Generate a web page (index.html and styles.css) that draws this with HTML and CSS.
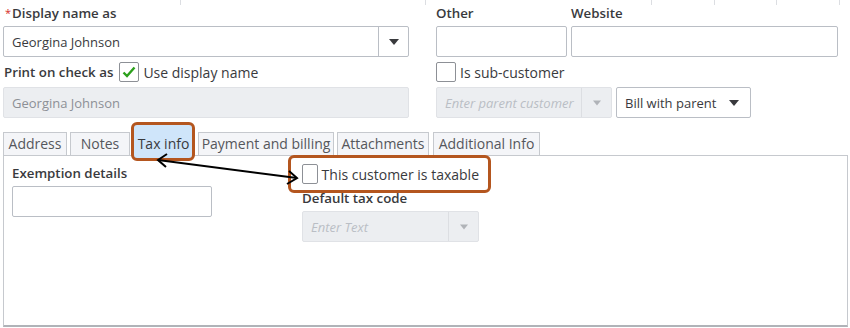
FILE: index.html
```html
<!DOCTYPE html>
<html lang="en">
<head>
    <meta charset="UTF-8">
    <title>Customer information</title>
    <link rel="stylesheet" href="styles.css">
</head>
<body>
    <div class="page">
        <div class="strip">
            <span class="cell c1"></span>
            <span class="cell c2"></span>
            <span class="cell c3"></span>
            <span class="cell c4"></span>
            <span class="cell c5"></span>
            <span class="cell c6"></span>
        </div>

        <div class="form">
            <div class="col-left">
                <div class="lbl"><span class="req">*</span>Display name as</div>
                <div class="select">
                    <span class="val">Georgina Johnson</span>
                    <span class="drop"><span class="caret"></span></span>
                </div>
                <div class="check-row">
                    <span class="lbl">Print on check as</span>
                    <span class="box">
                        <svg width="14" height="12" viewBox="0 0 14 12"><path d="M1.5 6.5 L5 10 L12.5 1.5" fill="none" stroke="#2ca01c" stroke-width="2.4"/></svg>
                    </span>
                    <span class="txt">Use display name</span>
                </div>
                <div class="input disabled">Georgina Johnson</div>
            </div>

            <div class="col-right">
                <div class="pair">
                    <div class="field other">
                        <div class="lbl">Other</div>
                        <div class="input"></div>
                    </div>
                    <div class="field website">
                        <div class="lbl">Website</div>
                        <div class="input"></div>
                    </div>
                </div>
                <div class="check-row">
                    <span class="box"></span>
                    <span class="txt">Is sub-customer</span>
                </div>
                <div class="pair">
                    <div class="select disabled parent">
                        <span class="val ph">Enter parent customer</span>
                        <span class="drop"><span class="caret"></span></span>
                    </div>
                    <div class="select bill">
                        <span class="val">Bill with parent</span>
                        <span class="caret"></span>
                    </div>
                </div>
            </div>
        </div>

        <!-- annotation box behind the active tab -->
        <div class="mark mark-tab"></div>

        <div class="tabs">
            <span class="tab t-address">Address</span>
            <span class="tab t-notes">Notes</span>
            <span class="tab t-tax active">Tax info</span>
            <span class="tab t-pay">Payment and billing</span>
            <span class="tab t-att">Attachments</span>
            <span class="tab t-add">Additional Info</span>
        </div>

        <div class="panel">
            <div class="tax-col">
                <div class="lbl">Exemption details</div>
                <div class="input exempt"></div>
            </div>
            <div class="tax-col">
                <div class="check-row taxable">
                    <span class="box"></span>
                    <span class="txt">This customer is taxable</span>
                </div>
                <div class="lbl">Default tax code</div>
                <div class="select disabled code">
                    <span class="val ph">Enter Text</span>
                    <span class="drop"><span class="caret"></span></span>
                </div>
            </div>
        </div>

        <div class="mark mark-taxable"></div>
        <svg class="arrow" width="850" height="328" viewBox="0 0 850 328">
            <g fill="none" stroke="#000" stroke-width="2">
                <line x1="158" y1="160" x2="297" y2="178"/>
                <path d="M167 154 L158 160 L166 167"/>
                <path d="M289 171 L297 178 L287 184"/>
            </g>
        </svg>
    </div>
</body>
</html>
```

FILE: styles.css
```css
* {
    margin: 0;
    padding: 0;
    box-sizing: border-box;
}
body {
    background: #fff;
    color: #393a3d;
    font-family: 'Open Sans', 'Liberation Sans', sans-serif;
    font-size: 13px;
}
.page {
    position: relative;
    width: 850px;
    height: 328px;
    overflow: hidden;
}
.strip {
    display: flex;
    height: 5px;
}
.cell {
    border-right: 1px solid #dcdee2;
}
.c1 { width: 181px; }
.c2 { width: 245px; }
.c3 { width: 226px; }
.c4 { width: 63px; }
.c5 { width: 62px; }
.c6 { width: 63px; }

.lbl {
    font-size: 13.3px;
    font-weight: 600;
    line-height: 16px;
    height: 21px;
    white-space: nowrap;
}
.req {
    color: #d52b1e;
    font-size: 11px;
    font-weight: 400;
    vertical-align: top;
    margin-right: 1px;
}

.form {
    display: flex;
    gap: 27px;
    padding-left: 3px;
}
.col-left {
    width: 406px;
}
.col-left > .lbl {
    padding-left: 2px;
}
.col-right {
    width: 402px;
}
.pair {
    display: flex;
    gap: 4px;
}
.other { width: 131px; }
.website { width: 267px; }

.input, .select {
    height: 31px;
    border: 1px solid #babec5;
    border-radius: 2px;
    background: #fff;
    display: flex;
    align-items: center;
}
.input {
    padding-left: 8px;
}
.disabled {
    background: #eceef1;
    border-color: #e0e2e6;
    color: #8d9096;
}
.select .val {
    flex: 1;
    padding-left: 8px;
    white-space: nowrap;
    overflow: hidden;
}
.ph {
    font-style: italic;
    color: #babec5;
}
.drop {
    width: 30px;
    height: 100%;
    border-left: 1px solid #babec5;
    display: flex;
    align-items: center;
    justify-content: center;
}
.disabled .drop {
    border-left-color: #dcdee2;
}
.caret {
    width: 0;
    height: 0;
    border-left: 5px solid transparent;
    border-right: 5px solid transparent;
    border-top: 6px solid #393a3d;
}
.disabled .caret {
    border-top-color: #b0b3b8;
    transform: scale(0.8);
}
.parent { width: 176px; }
.bill {
    width: 135px;
    padding-right: 11px;
}

.check-row {
    display: flex;
    align-items: center;
    height: 30px;
    gap: 4px;
}
.check-row .lbl {
    height: auto;
    padding-left: 1px;
    margin-right: 2px;
}
.box {
    width: 20px;
    height: 20px;
    border: 1px solid #8d9096;
    border-radius: 2px;
    background: #fff;
    display: flex;
    align-items: center;
    justify-content: center;
}
.txt {
    font-size: 14px;
    white-space: nowrap;
}

.tabs {
    display: flex;
    gap: 3px;
    margin-top: 14px;
    padding-left: 3px;
    height: 23px;
}
.tab {
    position: relative;
    z-index: 1;
    font-size: 14px;
    line-height: 22px;
    text-align: center;
    border: 1px solid #c6c9ce;
    border-bottom: none;
    background: #f4f5f8;
    color: #55575c;
    white-space: nowrap;
}
.t-address { width: 64px; }
.t-notes { width: 60px; }
.t-tax { width: 61px; }
.t-pay { width: 136px; margin-left: 1px; }
.t-att { width: 92px; }
.t-add { width: 107px; margin-left: 1px; }
.tab.active {
    background: transparent;
    border-color: transparent;
    color: #393a3d;
}

.panel {
    margin-left: 3px;
    width: 845px;
    height: 172px;
    border: 1px solid #c6c9ce;
    border-bottom: 2px solid #b0b3b8;
    display: flex;
    gap: 90px;
    padding: 9px 0 0 8px;
}
.tax-col {
    width: 200px;
}
.panel .tax-col:last-child {
    width: 177px;
    margin-top: -1px;
}
.exempt {
    width: 200px;
}
.taxable {
    height: 20px;
    margin-bottom: 6px;
}
.code {
    width: 177px;
}

.mark {
    position: absolute;
    border: 3px solid #b4561f;
    border-radius: 6px;
}
.mark-tab {
    left: 131px;
    top: 122px;
    width: 64px;
    height: 39px;
    background: #cfe5fa;
}
.mark-taxable {
    left: 288px;
    top: 155px;
    width: 203px;
    height: 38px;
}
.arrow {
    position: absolute;
    left: 0;
    top: 0;
    pointer-events: none;
}
```
